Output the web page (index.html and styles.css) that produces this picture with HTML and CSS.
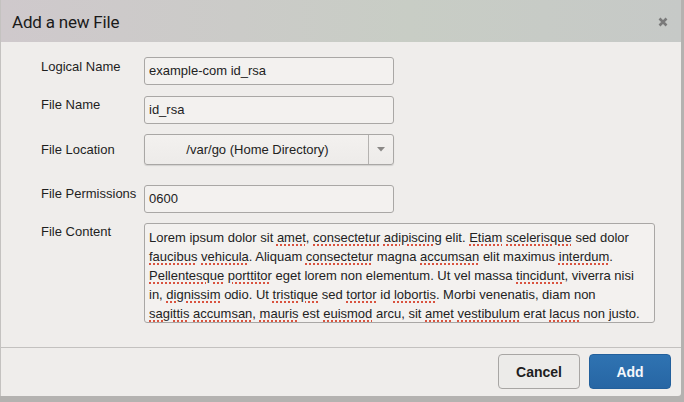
FILE: index.html
```html
<!DOCTYPE html>
<html>
<head>
<meta charset="utf-8">
<link rel="stylesheet" href="styles.css">
</head>
<body>
<div class="dialog">
  <div class="header">
    <h1 class="title">Add a new File</h1>
    <svg class="close" width="10" height="10" viewBox="0 0 10 10"><path d="M1.5 1.5 L8.5 8.5 M8.5 1.5 L1.5 8.5" stroke="#7a7a7a" stroke-width="2.6" stroke-linecap="butt"/></svg>
  </div>
  <div class="body">
    <div class="row r-logical">
      <label class="lbl lbl-first">Logical Name</label>
      <div class="input">example-com id_rsa</div>
    </div>
    <div class="row r-name">
      <label class="lbl">File Name</label>
      <div class="input">id_rsa</div>
    </div>
    <div class="row r-loc">
      <label class="lbl lbl-center">File Location</label>
      <div class="select">
        <span class="select-val">/var/go (Home Directory)</span>
        <span class="select-btn"><svg width="8" height="5" viewBox="0 0 8 5"><path d="M0 0 H8 L4 4.5 Z" fill="#8a8886"/></svg></span>
      </div>
    </div>
    <div class="row r-perm">
      <label class="lbl">File Permissions</label>
      <div class="input">0600</div>
    </div>
    <div class="row r-content">
      <label class="lbl">File Content</label>
      <div class="textarea">
        <div class="ln">Lorem ipsum dolor sit <u>amet</u>, <u>consectetur</u> <u>adipiscing</u> elit. <u>Etiam</u> <u>scelerisque</u> sed dolor</div>
        <div class="ln"><u>faucibus</u> <u>vehicula</u>. Aliquam <u>consectetur</u> magna <u>accumsan</u> elit maximus <u>interdum</u>.</div>
        <div class="ln"><u>Pellentesque</u> <u>porttitor</u> eget lorem non elementum. Ut vel massa <u>tincidunt</u>, viverra nisi</div>
        <div class="ln">in, <u>dignissim</u> odio. Ut <u>tristique</u> sed <u>tortor</u> id <u>lobortis</u>. Morbi venenatis, diam non</div>
        <div class="ln"><u>sagittis</u> <u>accumsan</u>, <u>mauris</u> est <u>euismod</u> arcu, sit <u>amet</u> <u>vestibulum</u> erat <u>lacus</u> non justo.</div>
      </div>
    </div>
  </div>
  <div class="footer">
    <button class="btn btn-cancel">Cancel</button>
    <button class="btn btn-add">Add</button>
  </div>
</div>
</body>
</html>
```

FILE: styles.css
```css
html, body {
  margin: 0;
  padding: 0;
}
body {
  width: 684px;
  height: 402px;
  background: #b4b2b0;
  font-family: "Liberation Sans", Arial, sans-serif;
  overflow: hidden;
}
.dialog {
  width: 680px;
  height: 396px;
  background: #efedeb;
  border-left: 1px solid #c4c2c0;
  display: flex;
  flex-direction: column;
  border-bottom-right-radius: 3px;
}
.header {
  height: 42px;
  flex: none;
  display: flex;
  align-items: center;
  justify-content: space-between;
  padding: 0 13px 0 11px;
  background: linear-gradient(to right, #cfc9cc 0%, #cbcbc8 35%, #c8cdc5 60%, #c6c9c7 100%);
}
.title {
  margin: 0;
  font-family: Roboto, "Liberation Sans", sans-serif;
  font-weight: 400;
  font-size: 17px;
  color: #1a1a1a;
  letter-spacing: -0.2px;
  padding-top: 2px;
}
.close {
  display: block;
  margin-top: 1px;
}
.body {
  flex: 1;
  padding: 15px 0 0 40px;
  border-bottom: 1px solid #c3c1bf;
}
.row {
  display: flex;
  align-items: flex-start;
}
.lbl {
  width: 103px;
  flex: none;
  font-size: 13px;
  line-height: 16px;
  color: #1e1e1e;
  padding-top: 1px;
}
.lbl-first { padding-top: 2px; }
.lbl-center { align-self: center; padding-top: 0; }
.r-name { margin-top: 11px; }
.r-loc { margin-top: 10px; }
.r-perm { margin-top: 20px; }
.r-content { margin-top: 10px; }
.input {
  box-sizing: border-box;
  width: 250px;
  height: 28px;
  border: 1px solid #a9a7a5;
  border-radius: 3px;
  background: #f3f1ef;
  font-size: 13px;
  line-height: 26px;
  padding: 0 4px;
  color: #222;
}
.select {
  box-sizing: border-box;
  width: 250px;
  height: 31px;
  border: 1px solid #a9a7a5;
  border-radius: 3px;
  background: linear-gradient(#f3f1ef, #edebe9);
  box-shadow: 0 1px 1px rgba(0,0,0,0.12);
  display: flex;
  font-size: 13px;
  color: #222;
}
.select-val {
  flex: 1;
  text-align: center;
  line-height: 29px;
  padding-left: 2px;
}
.select-btn {
  width: 24px;
  border-left: 1px solid #b4b2b0;
  display: flex;
  align-items: center;
  justify-content: center;
}
.select-btn svg { display: block; }
.textarea {
  box-sizing: border-box;
  width: 511px;
  height: 100px;
  border: 1px solid #a9a7a5;
  border-radius: 3px;
  background: #f3f1ef;
  font-size: 13px;
  line-height: 19px;
  color: #222;
  padding: 4px 4px 0 4px;
  overflow: hidden;
}
.ln { white-space: nowrap; }
.textarea u {
  text-decoration: underline dotted #d9533f;
  text-decoration-thickness: 1.5px;
  text-underline-offset: 2px;
}
.footer {
  height: 48px;
  flex: none;
  display: flex;
  justify-content: flex-end;
  align-items: flex-start;
  padding: 6px 10px 0 0;
  gap: 9px;
  box-sizing: border-box;
}
.btn {
  width: 82px;
  height: 35px;
  border-radius: 4px;
  font-family: "Liberation Sans", Arial, sans-serif;
  font-weight: 700;
  font-size: 14px;
  cursor: pointer;
}
.btn-cancel {
  background: #ecebe9;
  border: 1px solid #a8a6a4;
  color: #1e1e1e;
}
.btn-add {
  background: linear-gradient(#2f73b2, #2766a4);
  border: 1px solid #23609c;
  color: #f4f8fc;
}
```
